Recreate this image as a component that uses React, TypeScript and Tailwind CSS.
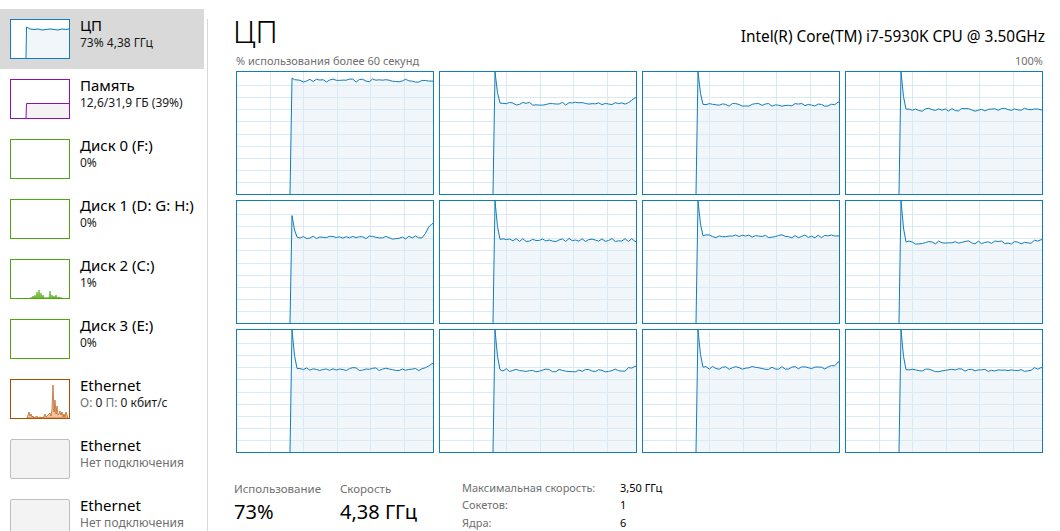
import React from 'react'

const FONT = { fontFamily: '"Segoe UI", "Noto Sans", sans-serif' }

// простой детерминированный шум
function rand(seed: number) {
  const x = Math.sin(seed * 12.9898 + 78.233) * 43758.5453
  return x - Math.floor(x)
}

interface CoreSpec {
  level: number
  peak: number
  seed: number
  endBump?: number
}

const cores: CoreSpec[] = [
  { level: 93, peak: 95, seed: 1 },
  { level: 74, peak: 100, seed: 2, endBump: 4 },
  { level: 73, peak: 100, seed: 3, endBump: 2 },
  { level: 69, peak: 100, seed: 4 },
  { level: 70, peak: 88, seed: 5, endBump: 12 },
  { level: 68, peak: 100, seed: 6 },
  { level: 71, peak: 100, seed: 7 },
  { level: 66, peak: 100, seed: 8, endBump: 2 },
  { level: 68, peak: 100, seed: 9, endBump: 5 },
  { level: 67, peak: 100, seed: 10, endBump: 3 },
  { level: 69, peak: 100, seed: 11, endBump: 4 },
  { level: 67, peak: 100, seed: 12, endBump: 3 },
]

const W = 196
const H = 122

function CoreGraph({ spec }: { spec: CoreSpec }) {
  const y = (v: number) => H - (v / 100) * H
  const x0 = 53
  const pts: [number, number][] = [
    [x0, y(0)],
    [x0 + 2, y(spec.peak)],
    [x0 + 4.5, y(spec.level + (spec.peak - spec.level) * 0.35)],
    [x0 + 7, y(spec.level + 0.5)],
  ]
  let xi = x0 + 10
  let k = 0
  while (xi < W) {
    const n = (rand(spec.seed * 100 + k) - 0.5) * 2.6
    let v = spec.level + n
    if (spec.endBump && xi > W - 12) v += spec.endBump * (1 - (W - xi) / 12)
    pts.push([xi, y(v)])
    xi += 3.3
    k++
  }
  pts.push([W, pts[pts.length - 1][1]])
  const line = pts.map(p => `${p[0].toFixed(1)},${p[1].toFixed(1)}`).join(' ')
  const fill = `${x0},${H} ${line} ${W},${H}`
  const vlines = [33, 66, 100, 133, 167]
  const hlines = [1, 2, 3, 4, 5, 6, 7, 8, 9].map(i => (i * H) / 10 + 0.5)

  return (
    <div className="h-[124px] border border-[#117dbb] bg-white">
      <svg width={W} height={H} className="block">
        <polygon points={fill} fill="#f1f6fa" />
        {vlines.map(v => (
          <line key={'v' + v} x1={v + 0.5} y1={0} x2={v + 0.5} y2={H} stroke="#d9eaf4" strokeWidth={1} />
        ))}
        {hlines.map(h => (
          <line key={'h' + h} x1={0} y1={Math.round(h) + 0.5} x2={W} y2={Math.round(h) + 0.5} stroke="#d9eaf4" strokeWidth={1} />
        ))}
        <polyline points={line} fill="none" stroke="#117dbb" strokeWidth={1} strokeLinejoin="round" />
      </svg>
    </div>
  )
}

function CpuThumb() {
  return (
    <svg width={60} height={40} className="block">
      <rect x={0.5} y={0.5} width={59} height={39} fill="#fff" stroke="#117dbb" />
      <rect x={16} y={9} width={43} height={30} fill="#f1f6fa" />
      <polyline
        points="16,39 16.5,8 20,10 24,10.5 28,10 32,11 36,10.5 40,10 44,10.5 48,11 52,10 56,10.5 59,10"
        fill="none"
        stroke="#117dbb"
        strokeWidth={1}
      />
    </svg>
  )
}

function MemThumb() {
  return (
    <svg width={60} height={40} className="block">
      <rect x={0.5} y={0.5} width={59} height={39} fill="#fff" stroke="#8b12ae" />
      <rect x={16} y={24} width={43} height={15} fill="#f4f2f4" />
      <polyline points="16,39 16.5,24.5 59,24.5" fill="none" stroke="#8b12ae" strokeWidth={1} />
    </svg>
  )
}

function DiskThumb({ active }: { active?: boolean }) {
  const spikes = [
    [22, 0], [23, 2], [24, 0], [25, 3], [26, 0], [27, 6], [28, 1], [29, 8], [30, 1], [31, 5], [32, 0], [33, 3], [34, 0],
    [39, 0], [40, 7], [41, 1], [42, 3], [43, 0], [44, 2], [45, 0], [46, 3], [47, 0], [49, 1], [50, 0],
  ]
  return (
    <svg width={60} height={40} className="block">
      <rect x={0.5} y={0.5} width={59} height={39} fill="#fff" stroke="#4da60c" />
      {active && (
        <polygon
          points={`20,39 ${spikes.map(s => `${s[0]},${39 - s[1]}`).join(' ')} 52,39`}
          fill="#8fcc5e"
          stroke="#4da60c"
          strokeWidth={0.6}
        />
      )}
    </svg>
  )
}

function NetThumb() {
  const spikes = [
    [17, 0], [18, 3], [19, 6], [20, 2], [21, 4], [22, 1], [23, 2], [24, 0], [27, 2], [28, 0], [30, 1], [33, 0], [34, 2], [35, 4], [36, 1], [38, 3],
    [40, 5], [41, 2], [42, 9], [43, 33], [44, 6], [45, 18], [46, 4], [47, 12], [48, 3], [49, 4], [50, 7], [51, 3], [52, 6], [53, 1], [54, 4], [55, 1], [56, 6], [57, 3],
  ]
  return (
    <svg width={60} height={40} className="block">
      <rect x={0.5} y={0.5} width={59} height={39} fill="#fff" stroke="#a74f01" />
      <polygon
        points={`17,39 ${spikes.map(s => `${s[0]},${39 - s[1]}`).join(' ')} 58,39`}
        fill="#f0c4a0"
        stroke="#b85c10"
        strokeWidth={0.7}
      />
    </svg>
  )
}

function OffThumb() {
  return <div className="w-[60px] h-[40px] rounded-[2px] border-[1.5px] border-[#bfbfbf] bg-[#f3f3f3]" />
}

interface SideItem {
  title: string
  sub: React.ReactNode
  thumb: React.ReactNode
  selected?: boolean
}

const items: SideItem[] = [
  { title: 'ЦП', sub: <span className="text-[#1a1a1a]">73% 4,38 ГГц</span>, thumb: <CpuThumb />, selected: true },
  { title: 'Память', sub: <span className="text-[#1a1a1a]">12,6/31,9 ГБ (39%)</span>, thumb: <MemThumb /> },
  { title: 'Диск 0 (F:)', sub: <span className="text-[#1a1a1a]">0%</span>, thumb: <DiskThumb /> },
  { title: 'Диск 1 (D: G: H:)', sub: <span className="text-[#1a1a1a]">0%</span>, thumb: <DiskThumb /> },
  { title: 'Диск 2 (C:)', sub: <span className="text-[#1a1a1a]">1%</span>, thumb: <DiskThumb active /> },
  { title: 'Диск 3 (E:)', sub: <span className="text-[#1a1a1a]">0%</span>, thumb: <DiskThumb /> },
  {
    title: 'Ethernet',
    sub: (
      <span>
        <span className="text-[#707070]">О: </span>
        <span className="text-[#1a1a1a]">0 </span>
        <span className="text-[#707070]">П: </span>
        <span className="text-[#1a1a1a]">0 кбит/с</span>
      </span>
    ),
    thumb: <NetThumb />,
  },
  { title: 'Ethernet', sub: <span className="text-[#707070]">Нет подключения</span>, thumb: <OffThumb /> },
  { title: 'Ethernet', sub: <span className="text-[#707070]">Нет подключения</span>, thumb: <OffThumb /> },
]

export default function App() {
  return (
    <div className="w-[1060px] h-[531px] overflow-hidden bg-white flex" style={FONT}>
      {/* боковая панель */}
      <div className="w-[207px] shrink-0 pt-[9px] flex flex-col">
        {items.map((it, i) => (
          <div
            key={i}
            className={`h-[60px] w-[204px] shrink-0 flex items-start pl-[10px] pt-[10px] ${it.selected ? 'bg-[#d9d9d9]' : ''}`}
          >
            {it.thumb}
            <div className="ml-[10px] -mt-[4px]">
              <div className="text-[15px] leading-[20px] text-black">{it.title}</div>
              <div className="text-[12px] leading-[16px]">{it.sub}</div>
            </div>
          </div>
        ))}
      </div>
      <div className="w-px shrink-0 mt-[19px] bg-[#d9d9d9]" />

      {/* основная область */}
      <div className="flex-1 pl-[28px] pr-[17px] flex flex-col">
        <div className="flex justify-between items-end h-[50px]">
          <div className="text-[31px] font-light leading-none text-black -ml-[3px] mb-[2px]">ЦП</div>
          <div className="text-[15.4px] leading-none text-black mb-[4px] mr-[-2px]">Intel(R) Core(TM) i7-5930K CPU @ 3.50GHz</div>
        </div>
        <div className="flex justify-between text-[11px] leading-[14px] text-[#707070] mt-[5px] mb-[3px]">
          <span>% использования более 60 секунд</span>
          <span>100%</span>
        </div>
        <div className="grid grid-cols-4 gap-[5px]">
          {cores.map((c, i) => (
            <CoreGraph key={i} spec={c} />
          ))}
        </div>

        <div className="flex mt-[28px] -ml-[2px]">
          <div className="w-[106px]">
            <div className="text-[11.5px] leading-[16px] text-[#707070]">Использование</div>
            <div className="text-[20px] leading-[26px] text-black mt-[2px]">73%</div>
          </div>
          <div className="w-[122px]">
            <div className="text-[11.5px] leading-[16px] text-[#707070]">Скорость</div>
            <div className="text-[20px] leading-[26px] text-black mt-[2px]">4,38 ГГц</div>
          </div>
          <div className="grid grid-cols-[158px_auto] text-[11px] leading-[17.5px] -mt-[2px]">
            <span className="text-[#707070]">Максимальная скорость:</span>
            <span className="text-black">3,50 ГГц</span>
            <span className="text-[#707070]">Сокетов:</span>
            <span className="text-black">1</span>
            <span className="text-[#707070]">Ядра:</span>
            <span className="text-black">6</span>
          </div>
        </div>
      </div>
    </div>
  )
}
